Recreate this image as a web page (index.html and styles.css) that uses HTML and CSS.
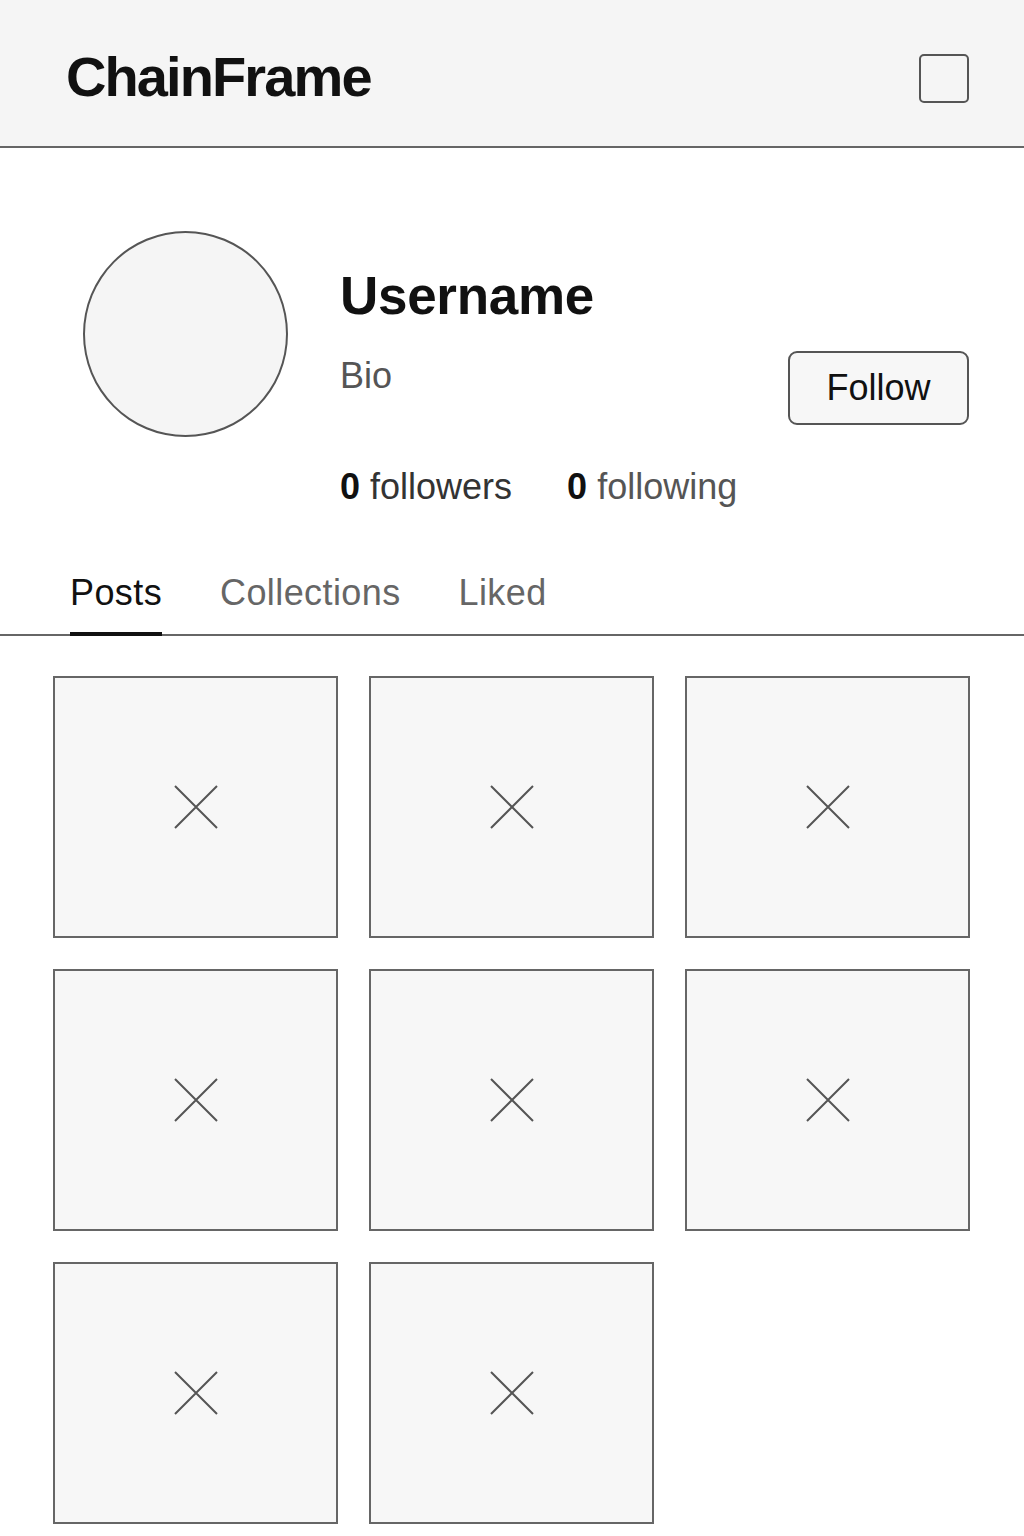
FILE: index.html
```html
<!DOCTYPE html>
<html lang="en">
<head>
<meta charset="utf-8">
<title>ChainFrame</title>
<link rel="stylesheet" href="styles.css">
</head>
<body>
<header class="topbar">
  <div class="brand">ChainFrame</div>
  <div class="menu-box"></div>
</header>

<section class="profile">
  <div class="avatar"></div>
  <div class="info">
    <div class="info-top">
      <div class="names">
        <h1 class="username">Username</h1>
        <p class="bio">Bio</p>
      </div>
      <button class="follow">Follow</button>
    </div>
    <div class="stats">
      <span class="stat"><b>0</b> followers</span>
      <span class="stat stat-light"><b>0</b> following</span>
    </div>
  </div>
</section>

<nav class="tabs">
  <span class="tab active">Posts</span>
  <span class="tab">Collections</span>
  <span class="tab">Liked</span>
</nav>

<main class="grid">
  <div class="tile"><svg viewBox="0 0 44 44" class="x"><path d="M1 1L43 43M43 1L1 43"/></svg></div>
  <div class="tile"><svg viewBox="0 0 44 44" class="x"><path d="M1 1L43 43M43 1L1 43"/></svg></div>
  <div class="tile"><svg viewBox="0 0 44 44" class="x"><path d="M1 1L43 43M43 1L1 43"/></svg></div>
  <div class="tile"><svg viewBox="0 0 44 44" class="x"><path d="M1 1L43 43M43 1L1 43"/></svg></div>
  <div class="tile"><svg viewBox="0 0 44 44" class="x"><path d="M1 1L43 43M43 1L1 43"/></svg></div>
  <div class="tile"><svg viewBox="0 0 44 44" class="x"><path d="M1 1L43 43M43 1L1 43"/></svg></div>
  <div class="tile"><svg viewBox="0 0 44 44" class="x"><path d="M1 1L43 43M43 1L1 43"/></svg></div>
  <div class="tile"><svg viewBox="0 0 44 44" class="x"><path d="M1 1L43 43M43 1L1 43"/></svg></div>
</main>
</body>
</html>
```
FILE: styles.css
```css
* { box-sizing: border-box; }
html, body { margin: 0; padding: 0; background: #fff; }
body {
  font-family: "Liberation Sans", Arial, sans-serif;
  color: #111;
  width: 1024px;
  height: 1536px;
  overflow: hidden;
}

.topbar {
  height: 148px;
  background: #f5f5f5;
  border-bottom: 2px solid #666;
  display: flex;
  align-items: center;
  justify-content: space-between;
  padding: 8px 55px 0 66px;
}
.brand {
  font-size: 56px;
  font-weight: 700;
  letter-spacing: -1.9px;
  color: #111;
  line-height: 1;
}
.menu-box {
  width: 50px;
  height: 49px;
  border: 2px solid #555;
  border-radius: 5px;
  margin-top: 2px;
}

.profile {
  display: flex;
  padding: 83px 55px 0 83px;
  height: 386px;
}
.avatar {
  width: 205px;
  height: 206px;
  border-radius: 50%;
  border: 2px solid #555;
  background: #f5f5f5;
  flex: none;
}
.info {
  flex: 1;
  margin-left: 52px;
  display: flex;
  flex-direction: column;
}
.info-top {
  display: flex;
  justify-content: space-between;
  align-items: flex-start;
}
.username {
  margin: 0;
  margin-top: 34px;
  font-size: 53px;
  font-weight: 700;
  line-height: 62px;
  letter-spacing: -0.3px;
  color: #111;
}
.bio {
  margin: 28px 0 0;
  font-size: 36px;
  line-height: 42px;
  color: #555;
}
.follow {
  margin-top: 120px;
  width: 181px;
  height: 74px;
  border: 2px solid #555;
  border-radius: 9px;
  background: #f7f7f7;
  font-family: "Liberation Sans", Arial, sans-serif;
  font-size: 36px;
  color: #111;
  padding: 0;
}
.stats {
  display: flex;
  gap: 55px;
  margin-top: 41px;
  font-size: 36px;
  line-height: 42px;
  color: #333;
}
.stat b { color: #111; font-weight: 700; }
.stat-light { color: #555; }

.tabs {
  display: flex;
  padding-left: 70px;
  border-bottom: 2px solid #666;
  height: 102px;
  align-items: flex-end;
}
.tab {
  font-size: 36px;
  line-height: 42px;
  letter-spacing: 0.4px;
  color: #666;
  padding-bottom: 18px;
  margin-right: 58px;
  border-bottom: 4px solid transparent;
  margin-bottom: -2px;
}
.tab.active {
  color: #111;
  border-bottom-color: #111;
}

.grid {
  display: grid;
  grid-template-columns: repeat(3, 285px);
  grid-auto-rows: 262px;
  column-gap: 31px;
  row-gap: 31px;
  padding: 40px 54px 0 53px;
}
.tile {
  border: 2px solid #666;
  background: #f7f7f7;
  display: flex;
  align-items: center;
  justify-content: center;
}
.x {
  width: 44px;
  height: 44px;
  stroke: #555;
  stroke-width: 2;
  fill: none;
}
```
